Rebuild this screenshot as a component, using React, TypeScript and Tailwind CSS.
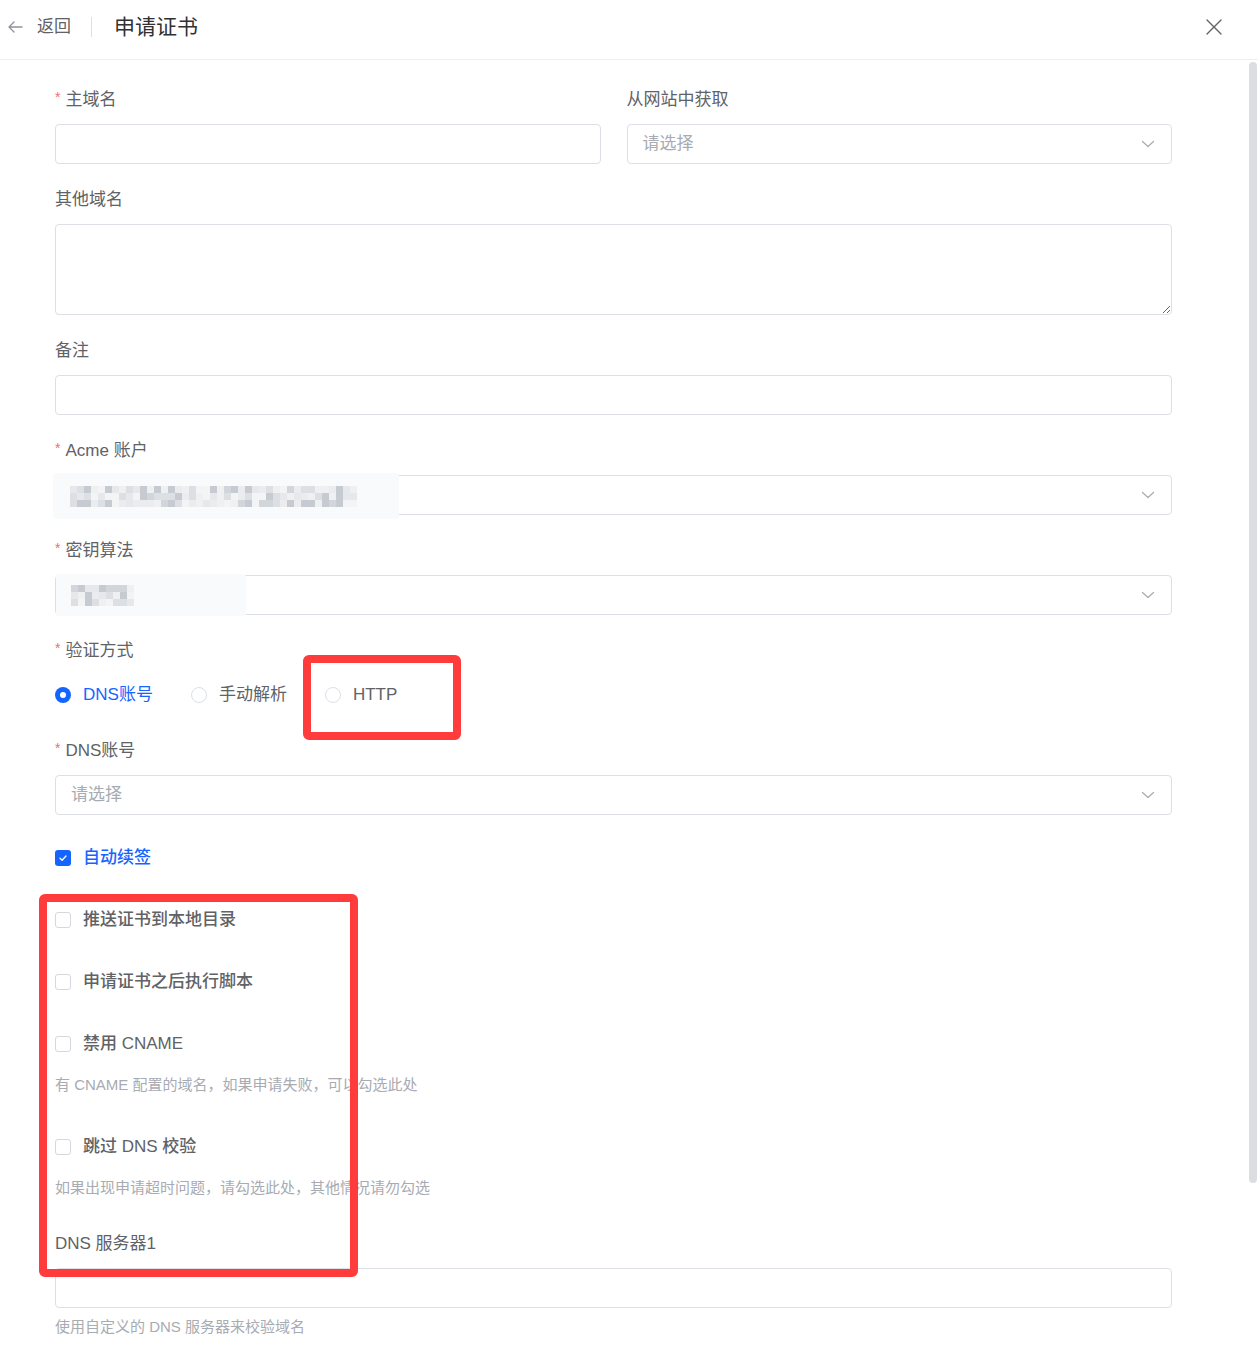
import React from "react";

const SHADES = [
  "bg-[#eef0f2]",
  "bg-[#e6e8eb]",
  "bg-[#dcdfe3]",
  "bg-[#d2d5da]",
  "bg-[#f3f4f6]",
  "bg-[#c6cad1]",
  "bg-[#eaecef]",
];

function hash(c: number, r: number, seed: number) {
  let h = (c * 374761393 + r * 668265263 + seed * 2147483647) | 0;
  h = (h ^ (h >>> 13)) * 1274126177;
  h = h ^ (h >>> 16);
  return Math.abs(h);
}

function Mosaic({ cols, rows, seed }: { cols: number; rows: number; seed: number }) {
  const cells: React.ReactNode[] = [];
  for (let r = 0; r < rows; r++) {
    for (let c = 0; c < cols; c++) {
      const v = hash(c, r, seed) % SHADES.length;
      cells.push(<div key={`${r}-${c}`} className={`w-[7px] h-[7px] ${SHADES[v]}`} />);
    }
  }
  return (
    <div className="grid blur-[0.5px]" style={{ gridTemplateColumns: `repeat(${cols}, 7px)` }}>
      {cells}
    </div>
  );
}

function Label({ text, required }: { text: string; required?: boolean }) {
  return (
    <div className="h-[36px] flex items-center pt-[4px] text-[17px] text-[#606266] mb-2">
      {required && <span className="text-[#f56c6c] text-[14px] mr-[5px] -mt-[6px]">*</span>}
      <span>{text}</span>
    </div>
  );
}

function Chevron() {
  return (
    <svg width="14" height="14" viewBox="0 0 14 14" fill="none">
      <path d="M1.5 4.5L7 9.5L12.5 4.5" stroke="#a8abb2" strokeWidth="1.2" strokeLinecap="round" strokeLinejoin="round" />
    </svg>
  );
}

function SelectBox({ placeholder, children }: { placeholder?: string; children?: React.ReactNode }) {
  return (
    <div className="relative h-10 rounded-[4px] border border-[#dcdfe6] bg-white flex items-center justify-between pl-[15px] pr-[16px]">
      <span className="text-[17px] text-[#a8abb2]">{placeholder}</span>
      <Chevron />
      {children}
    </div>
  );
}

function InputBox() {
  return <div className="h-10 rounded-[4px] border border-[#dcdfe6] bg-white" />;
}

function Radio({ label, checked }: { label: string; checked?: boolean }) {
  return (
    <div className="flex items-center mr-[38px]">
      {checked ? (
        <span className="w-4 h-4 rounded-full bg-[#1664ff] flex items-center justify-center">
          <span className="w-[6px] h-[6px] rounded-full bg-white" />
        </span>
      ) : (
        <span className="w-4 h-4 rounded-full border border-[#dcdfe6] bg-white" />
      )}
      <span className={`ml-[12px] text-[17px] ${checked ? "text-[#1664ff]" : "text-[#606266]"}`}>{label}</span>
    </div>
  );
}

function Checkbox({ label, checked, help, last }: { label: string; checked?: boolean; help?: string; last?: boolean }) {
  return (
    <div className={`flex flex-col ${last ? "pb-[16px]" : "pb-[22px]"}`}>
      <div className="h-10 flex items-center">
        {checked ? (
          <span className="w-4 h-4 rounded-[3px] bg-[#1664ff] flex items-center justify-center">
            <svg width="10" height="10" viewBox="0 0 10 10" fill="none">
              <path d="M2 5.2L4.1 7.2L8 3" stroke="white" strokeWidth="1.3" strokeLinecap="round" strokeLinejoin="round" />
            </svg>
          </span>
        ) : (
          <span className="w-4 h-4 rounded-[3px] border border-[#d4d7de] bg-white" />
        )}
        <span className={`ml-[12px] text-[17px] font-medium ${checked ? "text-[#1664ff]" : "text-[#606266]"}`}>{label}</span>
      </div>
      {help && <div className="pt-[10px] pb-[9px] h-[41px] leading-[22px] text-[15px] text-[#a8abb2]">{help}</div>}
    </div>
  );
}

export default function App() {
  return (
    <div className="relative w-[1258px] min-h-[1346px] bg-white overflow-hidden font-['Liberation_Sans','Noto_Sans_CJK_SC',sans-serif]">
      {/* header */}
      <div className="h-[60px] border-b border-[#eef0f3] flex items-center pl-[6px] pr-[36px] pb-[6px]">
        <svg width="18" height="18" viewBox="0 0 18 18" fill="none">
          <path d="M16 9H3M8 4L3 9L8 14" stroke="#909399" strokeWidth="1.3" strokeLinecap="round" strokeLinejoin="round" />
        </svg>
        <span className="ml-[13px] text-[17px] text-[#606266]">返回</span>
        <span className="ml-[20px] w-px h-[20px] bg-[#dcdfe6]" />
        <span className="ml-[22px] text-[21px] text-[#303133]">申请证书</span>
        <div className="flex-1" />
        <svg width="16" height="16" viewBox="0 0 16 16" fill="none">
          <path d="M1 1L15 15M15 1L1 15" stroke="#606266" strokeWidth="1.4" strokeLinecap="round" />
        </svg>
      </div>

      {/* body */}
      <div className="pl-[55px] pr-[86px] pt-5">
        <div className="grid grid-cols-2 gap-x-[26px]">
          <div className="mb-4">
            <Label text="主域名" required />
            <InputBox />
          </div>
          <div className="mb-4">
            <Label text="从网站中获取" />
            <SelectBox placeholder="请选择" />
          </div>
        </div>

        <div className="mb-4">
          <Label text="其他域名" />
          <textarea className="block w-full h-[91px] rounded-[4px] border border-[#dcdfe6] bg-white resize-y outline-none" />
        </div>

        <div className="mb-4">
          <Label text="备注" />
          <InputBox />
        </div>

        <div className="mb-4">
          <Label text="Acme 账户" required />
          <SelectBox>
            <div className="absolute left-[-3px] top-[-3px] w-[346px] h-[46px] bg-[#f9fafb] rounded-[3px] flex items-center pl-[17px]">
              <Mosaic cols={41} rows={3} seed={3} />
            </div>
          </SelectBox>
        </div>

        <div className="mb-4">
          <Label text="密钥算法" required />
          <SelectBox>
            <div className="absolute left-[0px] top-[-2px] w-[190px] h-[42px] bg-[#f9fafb] rounded-[3px] flex items-center pl-[15px]">
              <Mosaic cols={9} rows={3} seed={7} />
            </div>
          </SelectBox>
        </div>

        <div className="mb-4">
          <Label text="验证方式" required />
          <div className="h-10 flex items-center">
            <Radio label="DNS账号" checked />
            <Radio label="手动解析" />
            <Radio label="HTTP" />
          </div>
        </div>

        <div className="mb-4">
          <Label text="DNS账号" required />
          <SelectBox placeholder="请选择" />
        </div>

        <div className="pt-[7px]">
          <Checkbox label="自动续签" checked />
          <Checkbox label="推送证书到本地目录" />
          <Checkbox label="申请证书之后执行脚本" />
          <Checkbox label="禁用 CNAME" help="有 CNAME 配置的域名，如果申请失败，可以勾选此处" />
          <Checkbox label="跳过 DNS 校验" help="如果出现申请超时问题，请勾选此处，其他情况请勿勾选" last />
        </div>

        <div>
          <Label text="DNS 服务器1" />
          <InputBox />
          <div className="mt-2 h-[22px] leading-[22px] text-[15px] text-[#a8abb2]">使用自定义的 DNS 服务器来校验域名</div>
        </div>
      </div>

      {/* scrollbar thumb */}
      <div className="absolute left-[1249px] top-[62px] w-[8px] h-[1121px] rounded-full bg-[#dcdde0]" />

      {/* annotation boxes */}
      <div className="absolute left-[303px] top-[655px] w-[158px] h-[85px] border-[8px] border-[#ff3b3b] rounded-[6px]" />
      <div className="absolute left-[39px] top-[894px] w-[319px] h-[383px] border-[8px] border-[#ff3b3b] rounded-[6px]" />
    </div>
  );
}
